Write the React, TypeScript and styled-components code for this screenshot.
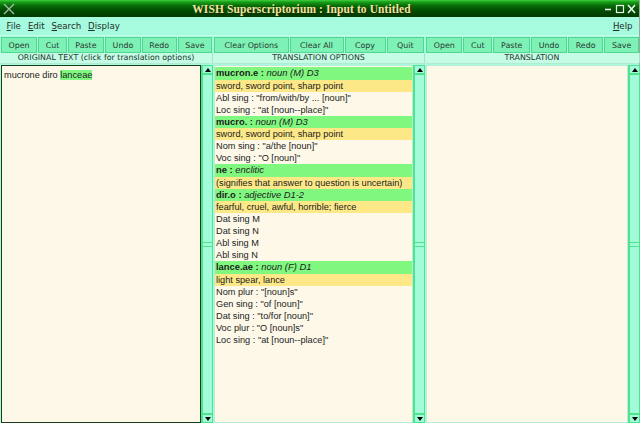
import React from "react";
import styled, { createGlobalStyle } from "styled-components";

const GlobalStyle = createGlobalStyle`
  html, body {
    margin: 0;
    padding: 0;
    width: 640px;
    height: 423px;
    overflow: hidden;
    background: #fdf8e8;
  }
  * { box-sizing: border-box; }
`;

type Entry = { kind: "head" | "gloss" | "form"; word?: string; info?: string; text?: string };

const entries: Entry[] = [
  { kind: "head", word: "mucron.e", info: "noun (M) D3" },
  { kind: "gloss", text: "sword, sword point, sharp point" },
  { kind: "form", text: 'Abl sing : "from/with/by ... [noun]"' },
  { kind: "form", text: 'Loc sing : "at [noun--place]"' },
  { kind: "head", word: "mucro.", info: "noun (M) D3" },
  { kind: "gloss", text: "sword, sword point, sharp point" },
  { kind: "form", text: 'Nom sing : "a/the [noun]"' },
  { kind: "form", text: 'Voc sing : "O [noun]"' },
  { kind: "head", word: "ne", info: "enclitic" },
  { kind: "gloss", text: "(signifies that answer to question is uncertain)" },
  { kind: "head", word: "dir.o", info: "adjective D1-2" },
  { kind: "gloss", text: "fearful, cruel, awful, horrible; fierce" },
  { kind: "form", text: "Dat sing M" },
  { kind: "form", text: "Dat sing N" },
  { kind: "form", text: "Abl sing M" },
  { kind: "form", text: "Abl sing N" },
  { kind: "head", word: "lance.ae", info: "noun (F) D1" },
  { kind: "gloss", text: "light spear, lance" },
  { kind: "form", text: 'Nom plur : "[noun]s"' },
  { kind: "form", text: 'Gen sing : "of [noun]"' },
  { kind: "form", text: 'Dat sing : "to/for [noun]"' },
  { kind: "form", text: 'Voc plur : "O [noun]s"' },
  { kind: "form", text: 'Loc sing : "at [noun--place]"' },
];

const groups = [
  ["Open", "Cut", "Paste", "Undo", "Redo", "Save"],
  ["Clear Options", "Clear All", "Copy", "Quit"],
  ["Open", "Cut", "Paste", "Undo", "Redo", "Save"],
];

const ArrowUp = () => (
  <svg width="6" height="4" viewBox="0 0 6 4">
    <path d="M0 4 L3 0 L6 4 Z" fill="#000" />
  </svg>
);

const ArrowDown = () => (
  <svg width="6" height="4" viewBox="0 0 6 4">
    <path d="M0 0 L3 4 L6 0 Z" fill="#000" />
  </svg>
);

const ScrollBar = () => (
  <Scroll>
    <ScrollButton $top>
      <ArrowUp />
    </ScrollButton>
    <Track>
      <Grip />
    </Track>
    <ScrollButton>
      <ArrowDown />
    </ScrollButton>
  </Scroll>
);

export default function App() {
  return (
    <Window>
      <GlobalStyle />
      <TitleBar>
        <CloseMark>
          <svg width="12" height="12" viewBox="0 0 12 12">
            <path d="M1 1 L11 11 M11 1 L1 11" stroke="#a8b8a8" strokeWidth="1.4" />
          </svg>
        </CloseMark>
        <Title>WISH Superscriptorium : Input to Untitled</Title>
        <Controls>
          <svg width="32" height="12" viewBox="0 0 32 12">
            <path d="M1 6.5 H7" stroke="#e8f4e8" strokeWidth="1.6" />
            <rect x="12.5" y="2.5" width="7" height="7" fill="none" stroke="#e8f4e8" strokeWidth="1.2" />
            <path d="M24 2 L31 10 M31 2 L24 10" stroke="#e8f4e8" strokeWidth="1.6" />
          </svg>
        </Controls>
      </TitleBar>
      <MenuBar>
        <MenuItem><u>F</u>ile</MenuItem>
        <MenuItem><u>E</u>dit</MenuItem>
        <MenuItem><u>S</u>earch</MenuItem>
        <MenuItem><u>D</u>isplay</MenuItem>
        <MenuSpacer />
        <MenuItem><u>H</u>elp</MenuItem>
      </MenuBar>
      <ToolBar>
        {groups.map((g, gi) => (
          <ToolGroup key={gi}>
            {g.map((label, i) => (
              <ToolButton key={i}>{label}</ToolButton>
            ))}
          </ToolGroup>
        ))}
      </ToolBar>
      <Headers>
        <Header>ORIGINAL TEXT (click for translation options)</Header>
        <Header>TRANSLATION OPTIONS</Header>
        <Header>TRANSLATION</Header>
      </Headers>
      <Panes>
        <Pane>
          <TextArea $dark>
            mucrone diro <Picked>lanceae</Picked>
          </TextArea>
          <ScrollBar />
        </Pane>
        <Pane>
          <OptionList>
            {entries.map((e, i) =>
              e.kind === "head" ? (
                <Row key={i} $kind="head">
                  <b>{e.word} :</b> <i>{e.info}</i>
                </Row>
              ) : (
                <Row key={i} $kind={e.kind}>
                  {e.text}
                </Row>
              )
            )}
          </OptionList>
          <ScrollBar />
        </Pane>
        <Pane>
          <TextArea />
          <ScrollBar />
        </Pane>
      </Panes>
    </Window>
  );
}

const Window = styled.div`
  width: 640px;
  height: 423px;
  display: flex;
  flex-direction: column;
  background: #a6fade;
  border-right: 1px solid #9aa89e;
  font-family: "DejaVu Sans", sans-serif;
`;

const TitleBar = styled.div`
  height: 17px;
  flex: none;
  display: flex;
  align-items: center;
  background: linear-gradient(#40d040 0px, #18a018 2px, #066806 6px, #024a02 11px, #013a01 17px);
`;

const CloseMark = styled.div`
  width: 18px;
  padding-left: 3px;
  display: flex;
  align-items: center;
`;

const Title = styled.div`
  flex: 1;
  text-align: center;
  font-family: "Liberation Serif", serif;
  font-weight: bold;
  font-size: 11.5px;
  color: #eee6a0;
  text-shadow: 1px 1px 0 #1a2a00;
  letter-spacing: 0.1px;
  padding-right: 16px;
`;

const Controls = styled.div`
  width: 38px;
  display: flex;
  align-items: center;
  justify-content: flex-end;
  padding-right: 3px;
`;

const MenuBar = styled.div`
  height: 19px;
  flex: none;
  display: flex;
  align-items: center;
  padding: 0 3px 0 3px;
  font-size: 8.6px;
  color: #1e2e26;
  background: #a6fade;
  border-bottom: 1px solid #c8fcea;
`;

const MenuItem = styled.span`
  padding: 0 3.5px;
  u { text-decoration-thickness: 1px; text-underline-offset: 1px; }
`;

const MenuSpacer = styled.div`
  flex: 1;
`;

const ToolBar = styled.div`
  height: 17px;
  flex: none;
  display: grid;
  grid-template-columns: 213px 212px 215px;
  background: #a6fade;
`;

const ToolGroup = styled.div`
  display: flex;
  padding: 1px 1px 0 1px;
  gap: 1px;
  min-width: 0;
`;

const ToolButton = styled.div`
  flex: 1 1 auto;
  min-width: 0;
  height: 16px;
  display: flex;
  align-items: center;
  justify-content: center;
  padding: 0 2px;
  font-size: 7.9px;
  color: #2a3a30;
  background: #7ef2b6;
  border: 1px solid #50d890;
  white-space: nowrap;
`;

const Headers = styled.div`
  height: 11px;
  flex: none;
  display: grid;
  grid-template-columns: 213px 212px 215px;
  background: #c4fce6;
  border-bottom: 1px solid #b0ecd0;
`;

const Header = styled.div`
  font-size: 7.9px;
  color: #26342c;
  text-align: center;
  line-height: 10px;
  border-right: 1px solid #9ee6c4;
`;

const Panes = styled.div`
  flex: 1;
  min-height: 0;
  display: grid;
  grid-template-columns: 213px 212px 215px;
  padding-top: 1px;
`;

const Pane = styled.div`
  display: flex;
  min-height: 0;
  padding-left: 1px;
`;

const TextArea = styled.div<{ $dark?: boolean }>`
  flex: 1;
  background: #fdf8e8;
  border: 1px solid ${({ $dark }) => ($dark ? "#1c3c1c" : "#c0ead8")};
  font-family: "Liberation Sans", Arial, sans-serif;
  font-size: 9.2px;
  color: #222;
  padding: 4px 2px;
  line-height: 11px;
`;

const Picked = styled.span`
  background: #80f880;
`;

const OptionList = styled.div`
  flex: 1;
  background: #fdf8e8;
  border: 1px solid #c0ead8;
  padding-top: 1px;
  font-family: "Liberation Sans", Arial, sans-serif;
  font-size: 9.2px;
  color: #1c1c1c;
`;

const Row = styled.div<{ $kind: "head" | "gloss" | "form" }>`
  height: ${({ $kind }) => ($kind === "head" ? "12.5px" : "12px")};
  line-height: 12px;
  padding-left: 1px;
  white-space: nowrap;
  overflow: hidden;
  background: ${({ $kind }) =>
    $kind === "head" ? "#80f880" : $kind === "gloss" ? "#fde888" : "transparent"};
  font-size: ${({ $kind }) => ($kind === "head" ? "9.4px" : "9.2px")};
  b { font-weight: bold; }
`;

const Scroll = styled.div`
  width: 12px;
  flex: none;
  display: flex;
  flex-direction: column;
  background: #a2fcda;
  border-left: 2px solid #4ee48e;
  border-right: 1px solid #4ee48e;
`;

const ScrollButton = styled.div<{ $top?: boolean }>`
  height: 10px;
  display: flex;
  align-items: center;
  justify-content: center;
  border-top: ${({ $top }) => ($top ? "1px solid #4ee48e" : "2px solid #4ee48e")};
  border-bottom: ${({ $top }) => ($top ? "2px solid #4ee48e" : "1px solid #4ee48e")};
`;

const Track = styled.div`
  flex: 1;
  display: flex;
  align-items: center;
`;

const Grip = styled.div`
  width: 100%;
  height: 5px;
  border-top: 1px solid #4ee48e;
  border-bottom: 1px solid #4ee48e;
`;
